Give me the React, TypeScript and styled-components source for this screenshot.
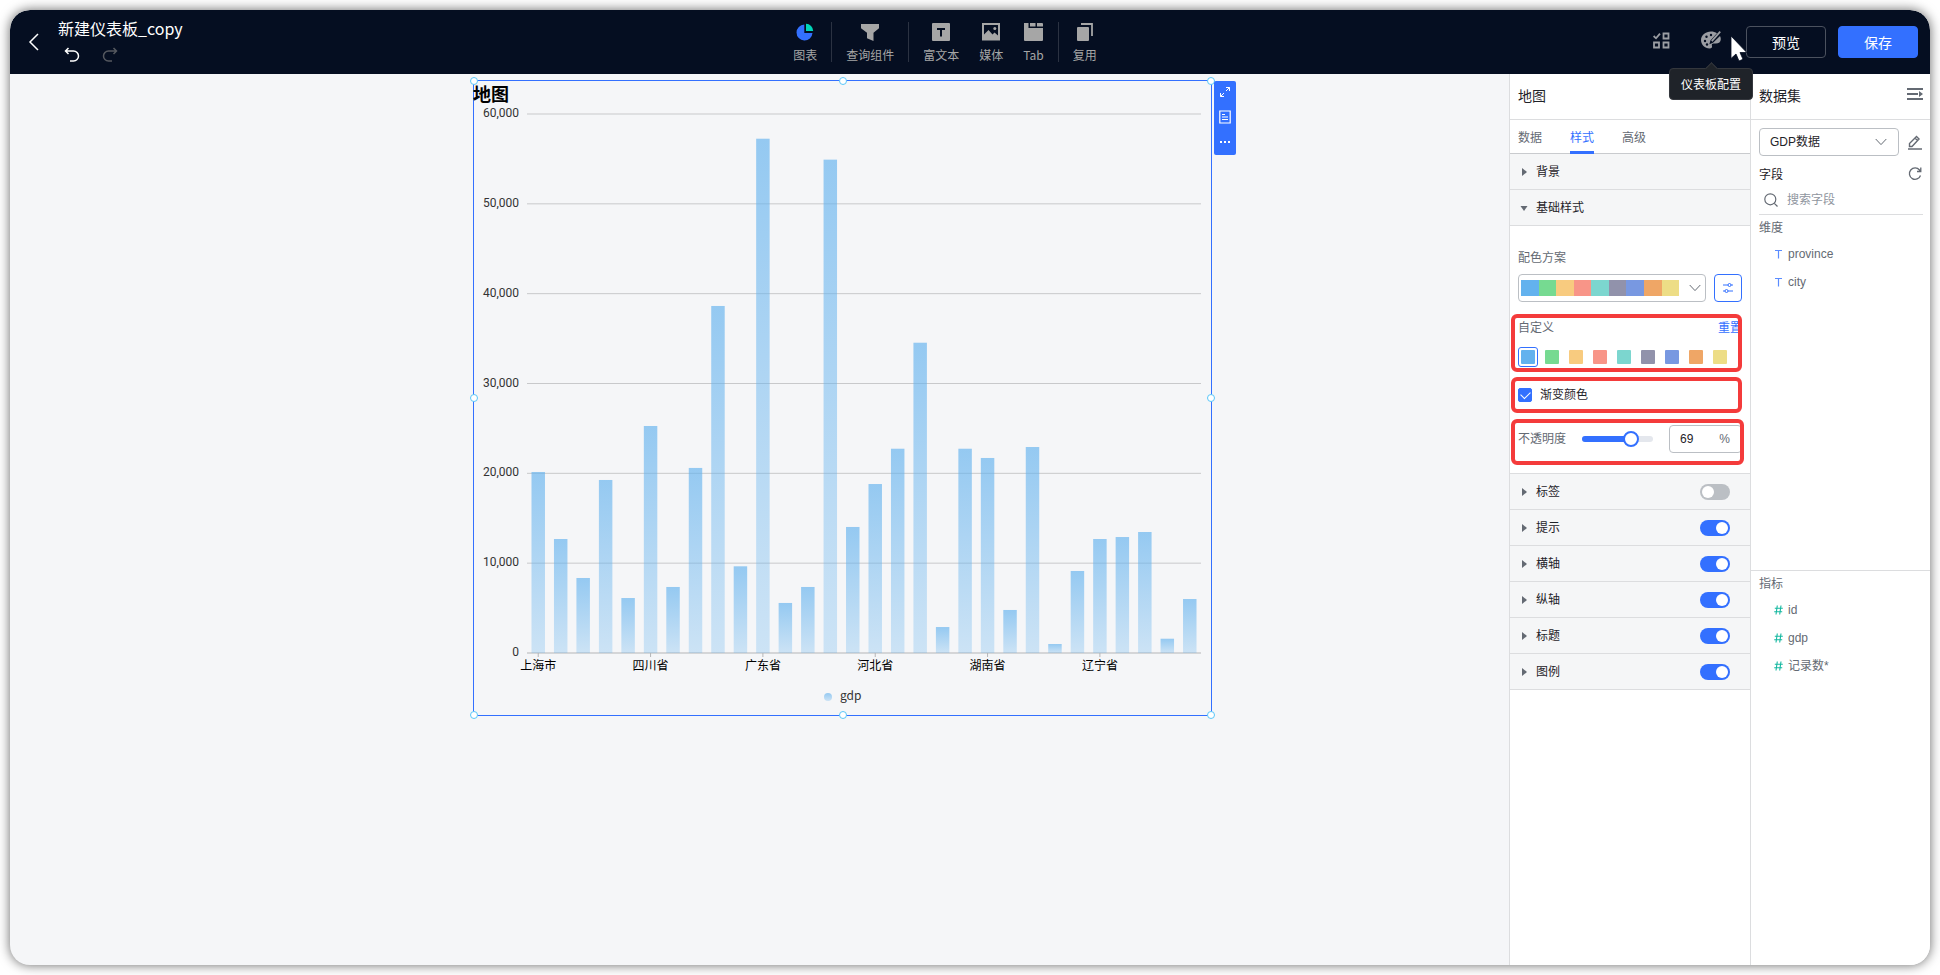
import React, { useState } from 'react';
import styled, { createGlobalStyle, css } from 'styled-components';

const GlobalStyle = createGlobalStyle`
  * { box-sizing: border-box; }
  body {
    margin: 0;
    background: #fff;
    font-family: "Liberation Sans", "Noto Sans CJK SC", sans-serif;
    font-size: 12px;
    line-height: 20px;
    color: #1f2329;
  }
  button, input, select { font: inherit; color: inherit; }
  button { cursor: pointer; }
  svg { display: block; flex: none; }
`;

const cjk = '"Noto Sans CJK SC", "Noto Sans", sans-serif';
const primary = '#3370ff';
const line = '#dcdddf';

const Page = styled.div`
  display: flex;
  min-height: 100vh;
  padding: 10px;
  background: #fff;
`;

const Window = styled.div`
  flex: 1;
  min-width: 0;
  display: flex;
  flex-direction: column;
  border-radius: 20px;
  overflow: hidden;
  background: #f5f6f8;
  box-shadow: 0 0 12px rgba(0, 0, 0, 0.6);
`;

/* ---------- top bar ---------- */

const TopBar = styled.header`
  position: relative;
  z-index: 2;
  flex: none;
  height: 64px;
  display: flex;
  align-items: center;
  background: #050e21;
  color: #fff;
  border-radius: 20px 20px 0 0;
`;

const TopLeft = styled.div`
  flex: 1 1 0;
  display: flex;
  align-items: center;
  gap: 16px;
  padding-left: 16px;
`;

const TopRight = styled.div`
  flex: 1 1 66px;
  display: flex;
  align-items: center;
  justify-content: flex-end;
  padding-right: 12px;
`;

const BareButton = styled.button`
  display: flex;
  align-items: center;
  justify-content: center;
  padding: 0;
  border: 0;
  background: none;
`;

const BatchButton = styled(BareButton)`
  padding-bottom: 4px;
`;

const BoardTitle = styled.h1`
  margin: 0;
  font: 400 16px/24px ${cjk};
`;

const History = styled.div`
  display: flex;
  gap: 22px;
  padding: 7px 6px 5px;
`;

const Tools = styled.nav`
  display: flex;
  align-items: center;
`;

const Tool = styled.button`
  display: flex;
  flex-direction: column;
  align-items: center;
  gap: 4px;
  padding: 4px 10px 0;
  border: 0;
  background: none;
  color: #a6a6a6;
  font: 400 12px/20px ${cjk};
`;

const ToolDivider = styled.span`
  width: 1px;
  height: 40px;
  margin: 0 4px;
  background: #2b3242;
`;

const TipAnchor = styled.div`
  position: relative;
  margin: 0 25px 0 31px;
  padding-bottom: 4px;
`;

const Tooltip = styled.div`
  position: absolute;
  top: 37px;
  left: 50%;
  transform: translateX(-50%);
  padding: 5px 11px;
  border: 1px solid #34373d;
  border-radius: 4px;
  background: #1f2329;
  font: 400 12px/20px ${cjk};
  white-space: nowrap;
  &::before {
    content: '';
    position: absolute;
    top: -5px;
    left: 50%;
    width: 8px;
    height: 8px;
    margin-left: -4px;
    background: #1f2329;
    border: solid #34373d;
    border-width: 1px 0 0 1px;
    transform: rotate(45deg);
  }
`;

const Pointer = styled.svg`
  position: absolute;
  right: 182px;
  top: 25px;
  pointer-events: none;
`;

const ActionButton = styled.button<{ $primary?: boolean }>`
  width: 80px;
  height: 32px;
  padding: 0;
  border-radius: 4px;
  border: 1px solid ${(p) => (p.$primary ? primary : '#4b515e')};
  background: ${(p) => (p.$primary ? primary : 'transparent')};
  color: #fff;
  font: 400 14px/22px ${cjk};
  & + & { margin-left: 12px; }
`;

/* ---------- canvas ---------- */

const Main = styled.div`
  flex: 1;
  display: flex;
  min-height: 0;
`;

const Canvas = styled.main`
  position: relative;
  flex: 1;
  min-width: 0;
`;

const ChartCard = styled.section`
  position: absolute;
  left: 463px;
  top: 6px;
  width: 739px;
  height: 636px;
  border: 1px solid ${primary};
`;

const ChartTitle = styled.h2`
  position: absolute;
  left: -1px;
  top: 2px;
  margin: 0;
  font: 700 18px/20px ${cjk};
  color: #000;
`;

const Handle = styled.i<{ $x: number; $y: number }>`
  position: absolute;
  left: ${(p) => p.$x}%;
  top: ${(p) => p.$y}%;
  width: 8px;
  height: 8px;
  margin: -4px;
  border: 1px solid #59c7f9;
  border-radius: 50%;
  background: #fff;
`;

const CardTools = styled.div`
  position: absolute;
  left: 100%;
  top: 0;
  margin-left: 3px;
  width: 22px;
  height: 74px;
  display: flex;
  flex-direction: column;
  align-items: center;
  justify-content: space-between;
  padding: 5px 0 6px;
  border-radius: 2px;
  background: ${primary};
`;

/* ---------- side panels ---------- */

const Panel = styled.aside<{ $width: number }>`
  flex: none;
  width: ${(p) => p.$width}px;
  display: flex;
  flex-direction: column;
  border-left: 1px solid ${line};
  background: #fff;
`;

const PanelHead = styled.div`
  display: flex;
  align-items: center;
  justify-content: space-between;
  height: 46px;
  padding: 0 7px 3px 8px;
  border-bottom: 1px solid ${line};
`;

const PanelTitle = styled.h2`
  margin: 0;
  font: 400 14px/22px ${cjk};
`;

const FoldButton = styled(BareButton)`
  height: 22px;
  align-items: flex-start;
  padding-top: 4px;
`;

const Tabs = styled.div`
  display: flex;
  gap: 28px;
  height: 34px;
  padding: 0 8px;
  border-bottom: 1px solid #c9cbce;
`;

const Tab = styled.button<{ $active?: boolean }>`
  height: 34px;
  padding: 4px 0 0;
  border: 0;
  border-bottom: 3px solid ${(p) => (p.$active ? primary : 'transparent')};
  background: none;
  color: ${(p) => (p.$active ? primary : '#646a73')};
  line-height: 20px;
`;

const SectionRow = styled.div`
  display: flex;
  align-items: center;
  justify-content: space-between;
  height: 36px;
  padding: 0 20px 0 10px;
  border-bottom: 1px solid ${line};
  background: #f5f6f7;
`;

const SectionToggle = styled.button`
  display: flex;
  align-items: center;
  gap: 8px;
  padding: 0;
  border: 0;
  background: none;
`;

const Switch = styled.input`
  appearance: none;
  width: 30px;
  height: 16px;
  margin: 0;
  padding: 2px;
  border-radius: 8px;
  background: #bbbfc4;
  display: flex;
  &::before {
    content: '';
    width: 12px;
    height: 12px;
    border-radius: 50%;
    background: #fff;
  }
  &:checked {
    background: ${primary};
    justify-content: flex-end;
  }
`;

const StyleBody = styled.div`
  padding: 22px 8px 8px;
  border-bottom: 1px solid ${line};
  color: #646a73;
`;

const fieldBox = css`
  height: 28px;
  border: 1px solid #bbbfc4;
  border-radius: 4px;
  background: #fff;
`;

const SchemeRow = styled.div`
  display: flex;
  gap: 8px;
  margin-top: 6px;
`;

const SchemeSelect = styled.button`
  ${fieldBox}
  flex: 1;
  display: flex;
  align-items: center;
  justify-content: space-between;
  padding: 0 4px 0 2px;
`;

const Strip = styled.span`
  display: flex;
  width: 158px;
  height: 16px;
`;

const StripCell = styled.span<{ $color: string }>`
  flex: 1;
  background: ${(p) => p.$color};
`;

const AdjustButton = styled(BareButton)`
  width: 28px;
  height: 28px;
  border: 1px solid ${primary};
  border-radius: 4px;
`;

const Group = styled.div`
  position: relative;
`;

const Mark = styled.span<{ $right: number }>`
  position: absolute;
  inset: 0 ${(p) => p.$right}px 0 -7px;
  border: 4px solid #f43b3b;
  border-radius: 6px;
  pointer-events: none;
`;

const CustomGroup = styled(Group)`
  margin-top: 12px;
  padding: 4px 0 5px;
`;

const SpaceRow = styled.div`
  display: flex;
  justify-content: space-between;
`;

const ResetButton = styled.button`
  padding: 0;
  border: 0;
  background: none;
  color: ${primary};
`;

const Swatches = styled.div`
  display: flex;
  gap: 4px;
  margin-top: 9px;
`;

const Swatch = styled.button<{ $color: string; $active: boolean }>`
  width: 20px;
  height: 20px;
  padding: 2px;
  border: 1px solid ${(p) => (p.$active ? primary : 'transparent')};
  border-radius: 3px;
  background: none;
  &::before {
    content: '';
    display: block;
    height: 14px;
    border-radius: 1px;
    background: ${(p) => p.$color};
  }
`;

const GradientGroup = styled(Group)`
  display: flex;
  align-items: center;
  height: 36px;
  margin-top: 5px;
`;

const CheckLabel = styled.label`
  display: flex;
  align-items: center;
  gap: 8px;
  color: #1f2329;
`;

const Checkbox = styled.input`
  appearance: none;
  width: 14px;
  height: 14px;
  margin: 0;
  border: 1px solid #bbbfc4;
  border-radius: 2px;
  display: grid;
  place-items: center;
  &:checked {
    border-color: ${primary};
    background: ${primary};
  }
  &:checked::before {
    content: '';
    width: 8px;
    height: 5px;
    margin-top: -2px;
    border: solid #fff;
    border-width: 0 0 1px 1px;
    transform: rotate(-45deg);
  }
`;

const OpacityGroup = styled(Group)`
  display: flex;
  align-items: center;
  height: 46px;
  margin-top: 6px;
  padding-bottom: 6px;
`;

const SliderBox = styled.div`
  display: grid;
  align-items: center;
  width: 71px;
  margin: 0 16px;
  & > * { grid-area: 1 / 1; }
`;

const Rail = styled.span`
  height: 6px;
  border-radius: 3px;
  background: #e4e7ed;
  overflow: hidden;
`;

const RailFill = styled.span`
  display: block;
  height: 100%;
  background: ${primary};
`;

const Range = styled.input`
  appearance: none;
  width: 87px;
  height: 16px;
  margin: 0 -8px;
  background: transparent;
  &::-webkit-slider-thumb {
    appearance: none;
    width: 16px;
    height: 16px;
    border: 2px solid ${primary};
    border-radius: 50%;
    background: #fff;
  }
`;

const NumberBox = styled.label`
  ${fieldBox}
  flex: 1;
  display: flex;
  align-items: center;
  padding: 0 11px 0 10px;
`;

const NumberInput = styled.input`
  flex: 1;
  width: 0;
  padding: 0;
  border: 0;
  outline: 0;
  background: none;
  color: #1f2329;
`;

/* ---------- dataset panel ---------- */

const DataTop = styled.div`
  padding: 8px 7px 0 8px;
`;

const DataRow = styled.div`
  display: flex;
  align-items: center;
  justify-content: space-between;
  padding-right: 1px;
`;

const SelectWrap = styled.div`
  display: grid;
  align-items: center;
  width: 140px;
  & > * { grid-area: 1 / 1; }
  & > svg { justify-self: end; margin-right: 12px; pointer-events: none; }
`;

const Select = styled.select`
  ${fieldBox}
  appearance: none;
  width: 100%;
  padding: 0 28px 0 10px;
`;

const FieldHead = styled(DataRow)`
  margin-top: 7px;
  height: 22px;
`;

const FieldTitle = styled.span`
  padding-top: 2px;
`;

const SearchRow = styled.label`
  display: flex;
  align-items: center;
  gap: 9px;
  height: 30px;
  padding-left: 5px;
  border-bottom: 1px solid ${line};
`;

const SearchInput = styled.input`
  flex: 1;
  width: 0;
  padding: 0;
  border: 0;
  outline: 0;
  &::placeholder { color: #8f959e; }
`;

const FieldGroup = styled.section<{ $grow: number }>`
  flex: ${(p) => p.$grow} 1 0;
  padding: 3px 8px 0;
  color: #646a73;
  & + & { border-top: 1px solid ${line}; }
`;

const GroupName = styled.h3`
  margin: 0 0 2px;
  font-size: 12px;
  font-weight: 400;
  line-height: 20px;
`;

const FieldList = styled.ul`
  margin: 0;
  padding: 0;
  list-style: none;
`;

const Field = styled.li`
  display: flex;
  align-items: center;
  gap: 5px;
  height: 28px;
  padding-left: 15px;
`;

/* ---------- icons ---------- */

const Chevron = () => (
  <svg width="12" height="8" viewBox="0 0 12 8" fill="none" stroke="#646a73">
    <path d="M.7 1 6 6.600 11.300 1" />
  </svg>
);

const FoldIcon = () => (
  <svg width="16" height="14" viewBox="0 0 16 14" fill="#646a73">
    <path d="M0 0h16v2H0zM0 5h11v2H0zM0 10h16v2H0zM12 3l4 3-4 3z" />
  </svg>
);

const Caret = ({ open }: { open?: boolean }) => (
  <svg width="8" height="8" viewBox="0 0 8 8" fill="#646a73">
    <path d={open ? 'M.5 2h7L4 7z' : 'M2 0v8l5-4z'} />
  </svg>
);

const TextIcon = () => (
  <svg width="9" height="10" viewBox="0 0 9 10" fill="none" stroke="#5b8cff" strokeWidth="1.2">
    <path d="M1 1.500h7M4.500 1.500V9.500" />
  </svg>
);

const HashIcon = () => (
  <svg width="9" height="10" viewBox="0 0 9 10" fill="none" stroke="#14b8a0" strokeWidth="1.100">
    <path d="M3.300.5 2 9.500M7 .5 5.700 9.500M.8 3.200h8M.2 6.800h8" />
  </svg>
);

const tools = {
  chart: (
    <svg width="18" height="18" viewBox="0 0 18 18">
      <path d="M8.300 1.500A8 8 0 1 0 16.500 10H8.300z" fill="#3370ff" />
      <path d="M10 .8V8h7.200A7.200 7.200 0 0 0 10 .8z" fill="#00d6b9" />
    </svg>
  ),
  query: (
    <svg width="18" height="18" viewBox="0 0 18 18" fill="#a6a6a6">
      <path d="M0 1h18v4.200L12.500 9.800V18L6 15.200V9.800L0 5.200z" />
    </svg>
  ),
  text: (
    <svg width="18" height="18" viewBox="0 0 18 18">
      <rect width="18" height="18" rx="1" fill="#a6a6a6" />
      <path d="M5 5h8v2H10v6.500H8V7H5z" fill="#050e21" />
    </svg>
  ),
  media: (
    <svg width="18" height="18" viewBox="0 0 18 18">
      <path d="M1 1h16v15.500H1z" fill="none" stroke="#a6a6a6" strokeWidth="2" />
      <path d="M2 11.500 6.500 7l4 4.500L12.500 9.500 16 12.500V16H2z" fill="#a6a6a6" />
      <circle cx="12.800" cy="5.500" r="1.500" fill="#a6a6a6" />
    </svg>
  ),
  tab: (
    <svg width="19" height="18" viewBox="0 0 19 18" fill="#a6a6a6">
      <path d="M0 0h4.500v5H19v12a1 1 0 0 1-1 1H1a1 1 0 0 1-1-1zM6 0h5.500v3.500H6zM13 0h5a1 1 0 0 1 1 1v2.500h-6z" />
    </svg>
  ),
  reuse: (
    <svg width="16" height="18" viewBox="0 0 16 18">
      <rect y="4" width="12" height="14" rx="1" fill="#a6a6a6" />
      <path d="M4 1h11v12" fill="none" stroke="#a6a6a6" strokeWidth="1.800" />
    </svg>
  ),
};

/* ---------- chart ---------- */

const gdp = [
  20150, 12690, 8350, 19260, 6120, 25270, 7350, 20600, 38630, 9650, 57250, 5570, 7350, 54920, 14030,
  18810, 22740, 34540, 2890, 22740, 21710, 4790, 22930, 1000, 9130, 12690, 12910, 13470, 1590, 6010,
];
const provinces = ['上海市', '四川省', '广东省', '河北省', '湖南省', '辽宁省'];
const plot = { left: 53, right: 727, top: 33, bottom: 572 };
const band = (plot.right - plot.left) / gdp.length;
const yOf = (v: number) => plot.bottom - (v / 60000) * (plot.bottom - plot.top);

const ChartSvg = styled.svg`
  width: 100%;
  height: 100%;
  font: 400 12px "Noto Sans CJK SC", sans-serif;
  fill: #333;
`;

const AxisValue = styled.text`
  font-family: Roboto, sans-serif;
  text-anchor: end;
`;

const BarChart = () => (
  <ChartSvg viewBox="0 0 737 634" role="img" aria-label="gdp">
    <defs>
      <linearGradient id="bar" x1="0" y1="0" x2="0" y2="1">
        <stop offset="0" stopColor="#63b2ee" stopOpacity="0.66" />
        <stop offset="1" stopColor="#63b2ee" stopOpacity="0.28" />
      </linearGradient>
    </defs>
    {[0, 1, 2, 3, 4, 5, 6].map((i) => (
      <g key={i}>
        <line
          x1={plot.left}
          x2={plot.right}
          y1={yOf(i * 10000)}
          y2={yOf(i * 10000)}
          stroke={i ? '#c8c9cb' : '#b4b5b7'}
        />
        <AxisValue x={45} y={yOf(i * 10000) + 3}>
          {(i * 10000).toLocaleString('en-US')}
        </AxisValue>
      </g>
    ))}
    {gdp.map((v, i) => (
      <rect
        key={i}
        x={plot.left + band * (i + 0.2)}
        y={yOf(v)}
        width={band * 0.6}
        height={plot.bottom - yOf(v)}
        fill="url(#bar)"
      />
    ))}
    {provinces.map((name, i) => {
      const x = plot.left + band * (i * 5 + 0.5);
      return (
        <g key={name}>
          <line x1={x} x2={x} y1={plot.bottom} y2={plot.bottom + 4} stroke="#b4b5b7" />
          <text x={x} y={589} textAnchor="middle" fill="#000">
            {name}
          </text>
        </g>
      );
    })}
    <circle cx="354" cy="616" r="4" fill="url(#bar)" />
    <text x="366" y="619">gdp</text>
  </ChartSvg>
);

const palette = [
  '#63b2ee', '#76da91', '#f8cb7f', '#f89588', '#7cd6cf', '#9192ab', '#7898e1', '#efa666', '#eddd86',
];
const handles = [[0, 0], [50, 0], [100, 0], [0, 50], [100, 50], [0, 100], [50, 100], [100, 100]];

const Section = ({ name, on }: { name: string; on: boolean }) => {
  const [checked, setChecked] = useState(on);
  return (
    <SectionRow>
      <SectionToggle>
        <Caret />
        {name}
      </SectionToggle>
      <Switch
        type="checkbox"
        role="switch"
        aria-label={name}
        checked={checked}
        onChange={(e) => setChecked(e.target.checked)}
      />
    </SectionRow>
  );
};

export default function App() {
  const [opacity, setOpacity] = useState(69);
  const [active, setActive] = useState(0);
  const [gradient, setGradient] = useState(true);

  return (
    <Page>
      <GlobalStyle />
      <Window>
        <TopBar>
          <TopLeft>
            <BareButton aria-label="返回">
              <svg width="16" height="18" viewBox="0 0 16 18" fill="none" stroke="#fff" strokeWidth="1.500">
                <path d="M12 1 4 9l8 8" />
              </svg>
            </BareButton>
            <div>
              <BoardTitle>新建仪表板_copy</BoardTitle>
              <History>
                <BareButton aria-label="撤销">
                  <svg width="16" height="16" viewBox="0 0 16 16" fill="none" stroke="#fff" strokeWidth="1.500">
                    <path d="M4.500 1 1.500 4l3 3M1.500 4H9.500a5 5 0 0 1 0 10H6" />
                  </svg>
                </BareButton>
                <BareButton aria-label="重做">
                  <svg width="16" height="16" viewBox="0 0 16 16" fill="none" stroke="#55585f" strokeWidth="1.500">
                    <path d="M11.500 1l3 3-3 3M14.500 4H6.500a5 5 0 0 0 0 10H10" />
                  </svg>
                </BareButton>
              </History>
            </div>
          </TopLeft>
          <Tools>
            <Tool>{tools.chart}图表</Tool>
            <ToolDivider />
            <Tool>{tools.query}查询组件</Tool>
            <ToolDivider />
            <Tool>{tools.text}富文本</Tool>
            <Tool>{tools.media}媒体</Tool>
            <Tool>{tools.tab}Tab</Tool>
            <ToolDivider />
            <Tool>{tools.reuse}复用</Tool>
          </Tools>
          <TopRight>
            <BatchButton aria-label="批量操作">
              <svg width="17" height="17" viewBox="0 0 17 17" fill="none" stroke="#9b9da3" strokeWidth="1.800">
                <path d="M.6 4 3 6.300 7 1.600M10.500 1.500h5v5h-5zM1 10.500h5v5H1zM10.500 10.500h5v5h-5z" />
              </svg>
            </BatchButton>
            <TipAnchor>
              <BareButton aria-label="仪表板配置">
                <svg width="20" height="18" viewBox="0 0 20 18">
                  <path
                    d="M10 .5C4.500.5 0 4.300 0 9c0 4.600 3.800 8.500 8.600 8.500 2.200 0 2.700-1.300 2.300-2.700-.4-1.600.6-2.500 2.300-2.300 4 .5 6.600-.9 6.600-4.500 0-1-.3-2-.8-2.900L12 11.800l-3.600 1.400 1-3.700L16 2.200C14.300 1.100 12.200.5 10 .5z"
                    fill="#9b9da3"
                  />
                  <path d="M10.800 10.200 19.200.6" stroke="#9b9da3" strokeWidth="1.800" />
                  <g fill="#050e21">
                    <circle cx="4" cy="10" r="1.200" />
                    <circle cx="5.500" cy="5.800" r="1.200" />
                    <circle cx="10" cy="4" r="1.200" />
                    <circle cx="6" cy="13.500" r="1.200" />
                  </g>
                </svg>
              </BareButton>
              <Tooltip role="tooltip">仪表板配置</Tooltip>
            </TipAnchor>
            <ActionButton>预览</ActionButton>
            <ActionButton $primary>保存</ActionButton>
          </TopRight>
          <Pointer width="18" height="27" viewBox="0 0 18 27">
            <path d="M1 1v22.500l5-4.500 3 7 4-1.700-3-6.800h6.800z" fill="#fff" stroke="#050e21" strokeWidth=".8" />
          </Pointer>
        </TopBar>

        <Main>
          <Canvas>
            <ChartCard>
              <BarChart />
              <ChartTitle>地图</ChartTitle>
              {handles.map(([x, y]) => (
                <Handle key={`${x}-${y}`} $x={x} $y={y} />
              ))}
              <CardTools>
                <BareButton aria-label="放大">
                  <svg width="12" height="12" viewBox="0 0 12 12" fill="none" stroke="#fff">
                    <path d="M7 1.500h3.500V5M10.500 1.500 7 5M5 10.500H1.500V7M1.500 10.500 5 7" />
                  </svg>
                </BareButton>
                <BareButton aria-label="详情">
                  <svg width="12" height="14" viewBox="0 0 12 14" fill="none" stroke="#fff">
                    <path d="M.8 1h10.400v12H.8zM3 4.500h3M3 7h6M3 9.500h6" strokeWidth="1.200" />
                  </svg>
                </BareButton>
                <BareButton aria-label="更多">
                  <svg width="12" height="14" viewBox="0 0 12 14" fill="#fff">
                    <path d="M1 6h2v2H1zM5 6h2v2H5zM9 6h2v2H9z" />
                  </svg>
                </BareButton>
              </CardTools>
            </ChartCard>
          </Canvas>

          <Panel $width={241}>
            <PanelHead>
              <PanelTitle>地图</PanelTitle>
              <FoldButton aria-label="收起"><FoldIcon /></FoldButton>
            </PanelHead>
            <Tabs>
              <Tab>数据</Tab>
              <Tab $active>样式</Tab>
              <Tab>高级</Tab>
            </Tabs>
            <SectionRow>
              <SectionToggle><Caret />背景</SectionToggle>
            </SectionRow>
            <SectionRow>
              <SectionToggle><Caret open />基础样式</SectionToggle>
            </SectionRow>
            <StyleBody>
              <div>配色方案</div>
              <SchemeRow>
                <SchemeSelect aria-haspopup="listbox" aria-label="配色方案">
                  <Strip>
                    {palette.map((c) => <StripCell key={c} $color={c} />)}
                  </Strip>
                  <Chevron />
                </SchemeSelect>
                <AdjustButton aria-label="调整">
                  <svg width="12" height="12" viewBox="0 0 12 12" fill="none" stroke="#3370ff">
                    <path d="M1 3h5M9 3h2M1 9h2M6 9h5" />
                    <circle cx="7.500" cy="3" r="1.500" />
                    <circle cx="4.500" cy="9" r="1.500" />
                  </svg>
                </AdjustButton>
              </SchemeRow>
              <CustomGroup>
                <SpaceRow>
                  <span>自定义</span>
                  <ResetButton>重置</ResetButton>
                </SpaceRow>
                <Swatches>
                  {palette.map((c, i) => (
                    <Swatch
                      key={c}
                      $color={c}
                      $active={i === active}
                      aria-label={c}
                      onClick={() => setActive(i)}
                    />
                  ))}
                </Swatches>
                <Mark $right={0} />
              </CustomGroup>
              <GradientGroup>
                <CheckLabel>
                  <Checkbox
                    type="checkbox"
                    checked={gradient}
                    onChange={(e) => setGradient(e.target.checked)}
                  />
                  渐变颜色
                </CheckLabel>
                <Mark $right={0} />
              </GradientGroup>
              <OpacityGroup>
                <label htmlFor="opacity">不透明度</label>
                <SliderBox>
                  <Rail><RailFill style={{ width: `${opacity}%` }} /></Rail>
                  <Range
                    id="opacity"
                    type="range"
                    min={0}
                    max={100}
                    value={opacity}
                    onChange={(e) => setOpacity(Number(e.target.value))}
                  />
                </SliderBox>
                <NumberBox>
                  <NumberInput
                    aria-label="不透明度"
                    value={opacity}
                    onChange={(e) => setOpacity(Number(e.target.value) || 0)}
                  />
                  %
                </NumberBox>
                <Mark $right={-2} />
              </OpacityGroup>
            </StyleBody>
            <Section name="标签" on={false} />
            <Section name="提示" on />
            <Section name="横轴" on />
            <Section name="纵轴" on />
            <Section name="标题" on />
            <Section name="图例" on />
          </Panel>

          <Panel $width={180}>
            <PanelHead>
              <PanelTitle>数据集</PanelTitle>
              <FoldButton aria-label="收起数据集"><FoldIcon /></FoldButton>
            </PanelHead>
            <DataTop>
              <DataRow>
                <SelectWrap>
                  <Select aria-label="数据集">
                    <option>GDP数据</option>
                  </Select>
                  <Chevron />
                </SelectWrap>
                <BareButton aria-label="编辑">
                  <svg width="14" height="15" viewBox="0 0 14 15" fill="none" stroke="#646a73" strokeWidth="1.400">
                    <path d="M1.500 11.500V8.500L8.500 1.500l2.500 2.500-7 7.500zM7 3l2.700 2.700" />
                    <path d="M0 14h14" />
                  </svg>
                </BareButton>
              </DataRow>
              <FieldHead>
                <FieldTitle>字段</FieldTitle>
                <BareButton aria-label="刷新">
                  <svg width="14" height="14" viewBox="0 0 14 14" fill="none" stroke="#646a73" strokeWidth="1.300">
                    <path d="M12.500 8.500A5.700 5.700 0 1 1 11.500 3L12.800 4.500M12.800.5v4H9" />
                  </svg>
                </BareButton>
              </FieldHead>
              <SearchRow>
                <svg width="14" height="14" viewBox="0 0 14 14" fill="none" stroke="#646a73" strokeWidth="1.200">
                  <circle cx="6.300" cy="6.300" r="5.500" />
                  <path d="M10.300 10.300l3.200 3.200" />
                </svg>
                <SearchInput placeholder="搜索字段" aria-label="搜索字段" />
              </SearchRow>
            </DataTop>
            <FieldGroup $grow={9}>
              <GroupName>维度</GroupName>
              <FieldList>
                <Field><TextIcon />province</Field>
                <Field><TextIcon />city</Field>
              </FieldList>
            </FieldGroup>
            <FieldGroup $grow={10}>
              <GroupName>指标</GroupName>
              <FieldList>
                <Field><HashIcon />id</Field>
                <Field><HashIcon />gdp</Field>
                <Field><HashIcon />记录数*</Field>
              </FieldList>
            </FieldGroup>
          </Panel>
        </Main>
      </Window>
    </Page>
  );
}
